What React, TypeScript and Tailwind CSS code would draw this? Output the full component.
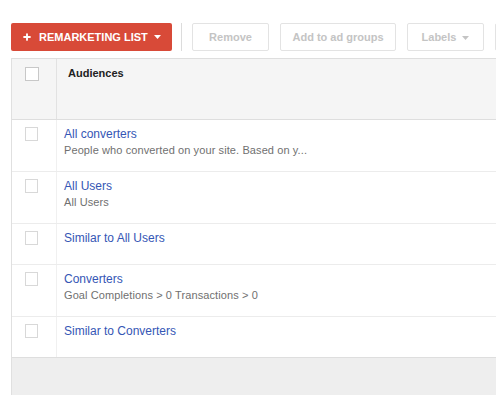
import { Plus } from "lucide-react";

type Audience = { name: string; desc?: string };

const AUDIENCES: Audience[] = [
  { name: "All converters", desc: "People who converted on your site. Based on y..." },
  { name: "All Users", desc: "All Users" },
  { name: "Similar to All Users" },
  { name: "Converters", desc: "Goal Completions > 0 Transactions > 0" },
  { name: "Similar to Converters" },
];

function Caret({ className }: { className: string }) {
  return (
    <svg width="7" height="4" viewBox="0 0 7 4" className={className}>
      <path d="M0 0h7L3.5 4z" fill="currentColor" />
    </svg>
  );
}

function GhostButton({ label, width, caret }: { label: string; width: string; caret?: boolean }) {
  return (
    <button
      className={`${width} h-[28px] shrink-0 flex items-center justify-center gap-[6px] border border-[#e3e3e3] rounded-[2px] bg-white text-[11px] font-bold text-[#c4c4c4]`}
    >
      {label}
      {caret && <Caret className="text-[#c4c4c4] mt-[1px]" />}
    </button>
  );
}

export default function App() {
  return (
    <div className="w-[496px] h-[405px] overflow-hidden bg-white" style={{ fontFamily: "'Liberation Sans', Arial, sans-serif" }}>
      <div className="flex items-center pl-[11px] pt-[23px] h-[51px] w-[600px]">
        <button className="w-[161px] h-[28px] shrink-0 flex items-center pl-[11px] gap-[7px] rounded-[2px] bg-[#d84a38] text-white text-[11px] font-bold">
          <Plus size={10} strokeWidth={4.5} />
          <span>REMARKETING LIST</span>
          <Caret className="text-white ml-[-1px]" />
        </button>
        <div className="w-px h-[28px] bg-[#dcdcdc] ml-[9px] mr-[10px] shrink-0" />
        <div className="flex gap-[11px]">
          <GhostButton label="Remove" width="w-[77px]" />
          <GhostButton label="Add to ad groups" width="w-[116px]" />
          <GhostButton label="Labels" width="w-[77px]" caret />
          <GhostButton label="" width="w-[78px]" />
        </div>
      </div>

      <div className="ml-[11px] mt-[7px] w-[600px] border-l border-[#e0e0e0]">
        <div className="flex h-[62px] bg-[#f5f5f5] border-t border-b border-[#dedede]">
          <div className="w-[45px] shrink-0 border-r border-[#e2e2e2] pl-[13px] pt-[8px]">
            <div className="w-[14px] h-[14px] border border-[#c8c8c8] bg-white" />
          </div>
          <div className="pl-[11px] pt-[6px] text-[11px] font-bold text-[#222]">Audiences</div>
        </div>

        {AUDIENCES.map((a, i) => (
          <div
            key={a.name}
            className={`flex ${a.desc ? "h-[52px]" : "h-[41px]"} ${i < AUDIENCES.length - 1 ? "border-b border-[#ececec]" : "border-b border-[#dedede]"}`}
          >
            <div className="w-[45px] shrink-0 border-r border-[#f0f0f0] pl-[13px] pt-[7px]">
              <div className="w-[13px] h-[14px] border border-[#d8d8d8] bg-white" />
            </div>
            <div className="pl-[7px] pt-[6px] flex flex-col">
              <span className="text-[12px] leading-[16px] text-[#3556b5]">{a.name}</span>
              {a.desc && <span className="text-[11px] leading-[16px] text-[#707070] tracking-[0.1px]">{a.desc}</span>}
            </div>
          </div>
        ))}

        <div className="h-[37px] bg-[#eeeeee]" />
      </div>
    </div>
  );
}
